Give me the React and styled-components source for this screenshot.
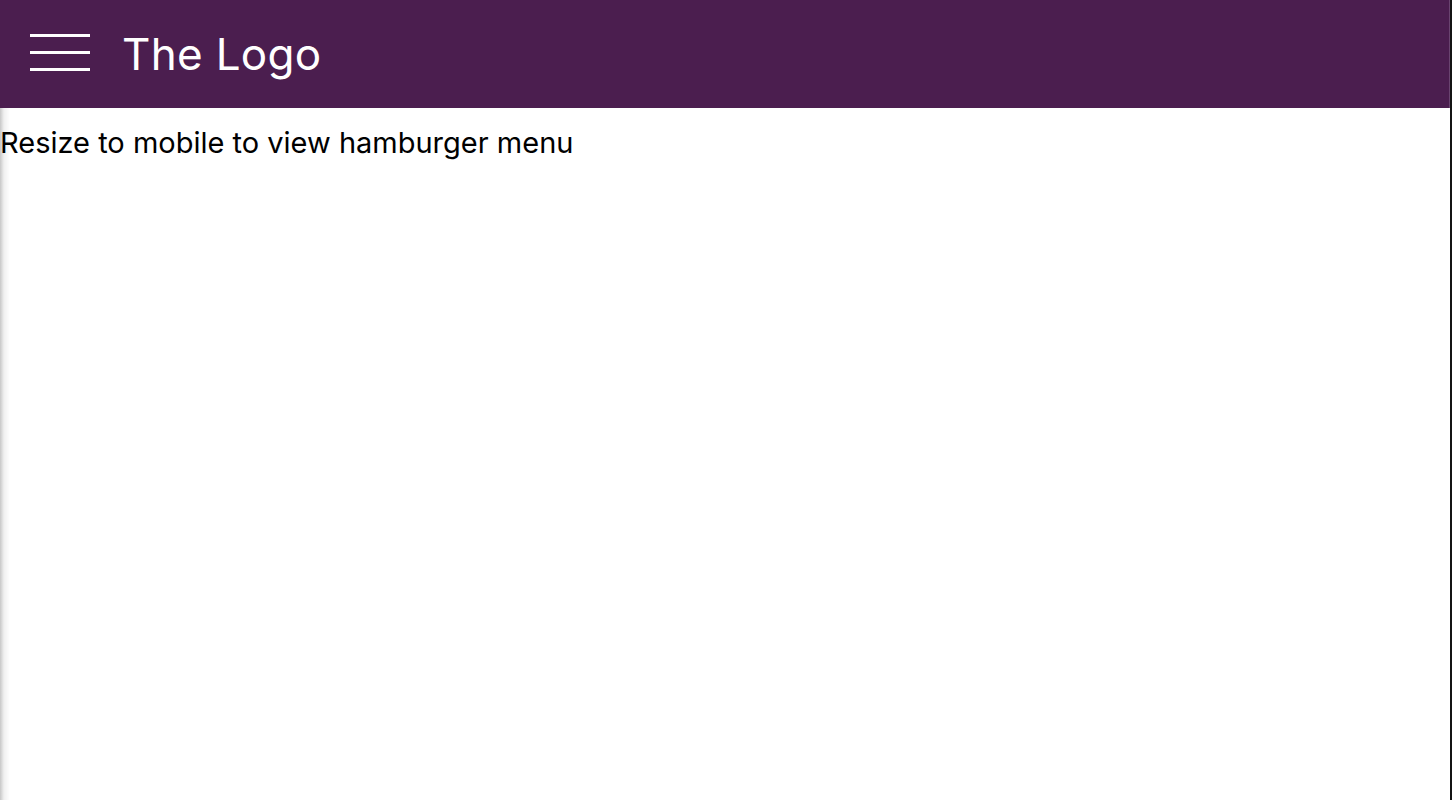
import React from "react";
import styled, { createGlobalStyle } from "styled-components";

const GlobalStyle = createGlobalStyle`
    html, body {
        margin: 0;
        padding: 0;
        background: #fff;
    }
    body {
        font-family: Inter, "Noto Sans", "Liberation Sans", sans-serif;
    }
`;

const Page = styled.div`
    position: relative;
    width: 1450px;
    min-height: 800px;
    border-right: 2px solid #141414;
    background: #fff;
`;

const Shade = styled.div`
    position: absolute;
    top: 108px;
    left: 0;
    bottom: 0;
    width: 10px;
    background: linear-gradient(to right, rgba(0, 0, 0, 0.22), rgba(0, 0, 0, 0.06) 40%, rgba(0, 0, 0, 0));
    pointer-events: none;
`;

const Header = styled.header`
    display: flex;
    align-items: center;
    gap: 32px;
    height: 108px;
    padding: 0 30px;
    background: #4b1e4f;
    border-right: 1px solid #6a4470;
`;

const Burger = styled.button`
    display: flex;
    flex-direction: column;
    justify-content: space-between;
    width: 60px;
    height: 37px;
    padding: 0;
    margin-top: -4px;
    border: 0;
    background: none;
    cursor: pointer;
`;

const Line = styled.span`
    display: block;
    height: 3px;
    background: #fff;
`;

const Logo = styled.h1`
    margin: 0;
    color: #fff;
    font-size: 44px;
    font-weight: 400;
    letter-spacing: 0.3px;
`;

const Note = styled.p`
    margin: 0;
    padding-top: 18px;
    font-size: 29px;
    line-height: 34px;
    color: #000;
    letter-spacing: 0;
`;

const App = () => {
    return (
        <Page>
            <GlobalStyle />
            <Header>
                <Burger aria-label="menu">
                    <Line />
                    <Line />
                    <Line />
                </Burger>
                <Logo>The Logo</Logo>
            </Header>
            <Note>Resize to mobile to view hamburger menu</Note>
            <Shade />
        </Page>
    );
};

export default App;
